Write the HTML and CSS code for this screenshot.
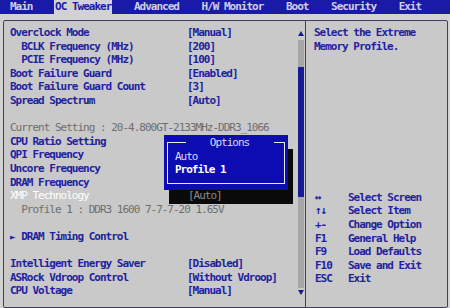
FILE: index.html
```html
<!DOCTYPE html>
<html lang="en">
<head>
  <meta charset="UTF-8">
  <title>OC Tweaker</title>
  <link rel="stylesheet" href="styles.css">
</head>
<body>

  <!-- Top menu -->
  <nav class="menubar">
    <span class="tab">Main</span>
    <span class="tab active">OC Tweaker</span>
    <span class="tab">Advanced</span>
    <span class="tab">H/W Monitor</span>
    <span class="tab">Boot</span>
    <span class="tab">Security</span>
    <span class="tab">Exit</span>
  </nav>

  <div class="frame">
    <!-- Settings list -->
    <div class="left">
      <div class="list">
        <div class="row"><span class="label">Overclock Mode</span><span>[Manual]</span></div>
        <div class="row"><span class="label sub">BCLK Frequency (MHz)</span><span>[200]</span></div>
        <div class="row"><span class="label sub">PCIE Frequency (MHz)</span><span>[100]</span></div>
        <div class="row"><span class="label">Boot Failure Guard</span><span>[Enabled]</span></div>
        <div class="row"><span class="label">Boot Failure Guard Count</span><span>[3]</span></div>
        <div class="row"><span class="label">Spread Spectrum</span><span>[Auto]</span></div>
        <div class="row"></div>
        <div class="row info">Current Setting : 20-4.800GT-2133MHz-DDR3_1066</div>
        <div class="row"><span class="label">CPU Ratio Setting</span></div>
        <div class="row"><span class="label">QPI Frequency</span></div>
        <div class="row"><span class="label">Uncore Frequency</span></div>
        <div class="row"><span class="label">DRAM Frequency</span></div>
        <div class="row selected"><span class="label">XMP Technology</span><span class="shaded">[Auto]</span></div>
        <div class="row info sub">Profile 1 : DDR3 1600 7-7-7-20 1.65V</div>
        <div class="row"></div>
        <div class="row"><span class="arrow">&#9658;</span>DRAM Timing Control</div>
        <div class="row"></div>
        <div class="row"><span class="label">Intelligent Energy Saver</span><span>[Disabled]</span></div>
        <div class="row"><span class="label">ASRock Vdroop Control</span><span>[Without Vdroop]</span></div>
        <div class="row"><span class="label">CPU Voltage</span><span>[Manual]</span></div>
      </div>

      <div class="scrollbar">
        <div class="scroll-up"></div>
        <div class="track"><div class="thumb"></div></div>
        <div class="scroll-down"></div>
      </div>

      <!-- Options popup -->
      <div class="popup">
        <div class="popup-box">
          <div class="popup-title">Options</div>
          <div class="option">Auto</div>
          <div class="option current">Profile 1</div>
        </div>
      </div>
    </div>

    <!-- Help panel -->
    <div class="right">
      <div class="help">Select the Extreme<br>Memory Profile.</div>
      <div class="keys">
        <div class="key-row"><span class="key">&#8596;</span>Select Screen</div>
        <div class="key-row"><span class="key">&#8593;&#8595;</span>Select Item</div>
        <div class="key-row"><span class="key">+-</span>Change Option</div>
        <div class="key-row"><span class="key">F1</span>General Help</div>
        <div class="key-row"><span class="key">F9</span>Load Defaults</div>
        <div class="key-row"><span class="key">F10</span>Save and Exit</div>
        <div class="key-row"><span class="key">ESC</span>Exit</div>
      </div>
    </div>
  </div>

</body>
</html>
```

FILE: styles.css
```css
/* Base */
body {
  margin: 0;
  width: 450px;
  height: 308px;
  overflow: hidden;
  background-color: #d2d2d2;
  font-family: 'DejaVu Sans Mono', 'Liberation Mono', monospace;
  font-size: 11px;
  font-weight: bold;
  letter-spacing: -1px;
  color: #22229e;
}

/* Menu bar */
.menubar {
  height: 14px;
  line-height: 14px;
  background-color: #1a1aa8;
  padding-left: 10px;
  display: flex;
  gap: 22.6px;
  margin-bottom: 6px;
}

.tab {
  color: #cfcfe4;
}

.tab.active {
  background-color: #d2d2d2;
  color: #1a1aa8;
  padding: 0 1px;
  margin: 0 -1px;
}

/* Main frame */
.frame {
  height: 286px;
  margin: 0 2px 0 3px;
  border: 1px solid #3e3e66;
  border-radius: 2px;
  background-color: #c9c9c9;
  display: flex;
}

.left {
  width: 301px;
  display: flex;
  position: relative;
  border-right: 1px solid #3e3e66;
}

.list {
  flex: 1;
  padding: 5px 0 0 6px;
}

.row {
  height: 13.6px;
  line-height: 13.6px;
  display: flex;
  white-space: nowrap;
}

.label {
  width: 177px;
  flex-shrink: 0;
}

.sub {
  padding-left: 11.2px;
}

.label.sub {
  width: 165.8px;
}

.info {
  color: #6e6e6e;
  font-weight: normal;
}

.selected .label {
  color: #ffffff;
  font-weight: normal;
}

.shaded {
  position: relative;
  z-index: 3;
  color: #8c8c8c;
  font-weight: normal;
  margin-left: 1px;
}

.arrow {
  width: 11.2px;
  font-size: 9.5px;
  letter-spacing: 0;
}

/* Scrollbar */
.scrollbar {
  width: 6px;
  margin-right: 1px;
  padding: 10px 0 12px;
  display: flex;
  flex-direction: column;
  align-items: center;
}

.scroll-up,
.scroll-down {
  width: 0;
  height: 0;
  border-left: 3px solid transparent;
  border-right: 3px solid transparent;
}

.scroll-up {
  border-bottom: 5px solid #1a1a8c;
  margin-bottom: 4px;
}

.scroll-down {
  border-top: 5px solid #1a1a8c;
  margin-top: 2px;
}

.track {
  flex: 1;
  width: 6px;
  background-color: #a6a6a6;
}

.thumb {
  margin-top: 27px;
  height: 130px;
  background-color: #1a1a96;
}

/* Popup */
.popup {
  position: absolute;
  left: 160px;
  top: 114px;
  width: 118px;
  padding: 7px 3px 6px 3px;
  background-color: #0c0cb2;
  box-shadow: 5px 14px 0 #0a0a0a;
  z-index: 2;
}

.popup-box {
  border: 1px solid #e8e8f4;
  padding: 0 0 6px 7px;
}

.popup-title {
  width: 88px;
  margin: -7px auto 0;
  background-color: #0c0cb2;
  color: #dcdcf0;
  text-align: center;
  line-height: 13.6px;
  font-weight: normal;
}

.option {
  line-height: 13.6px;
  color: #dcdcf0;
  font-weight: normal;
}

.option.current {
  color: #ffffff;
  font-weight: bold;
}

/* Help panel */
.right {
  flex: 1;
  padding: 5px 0 21px 8px;
  display: flex;
  flex-direction: column;
}

.help {
  line-height: 13.6px;
}

.keys {
  margin-top: auto;
}

.key-row {
  height: 13.6px;
  line-height: 13.6px;
  display: flex;
  white-space: nowrap;
}

.key {
  width: 33px;
  padding-left: 1px;
}
```
